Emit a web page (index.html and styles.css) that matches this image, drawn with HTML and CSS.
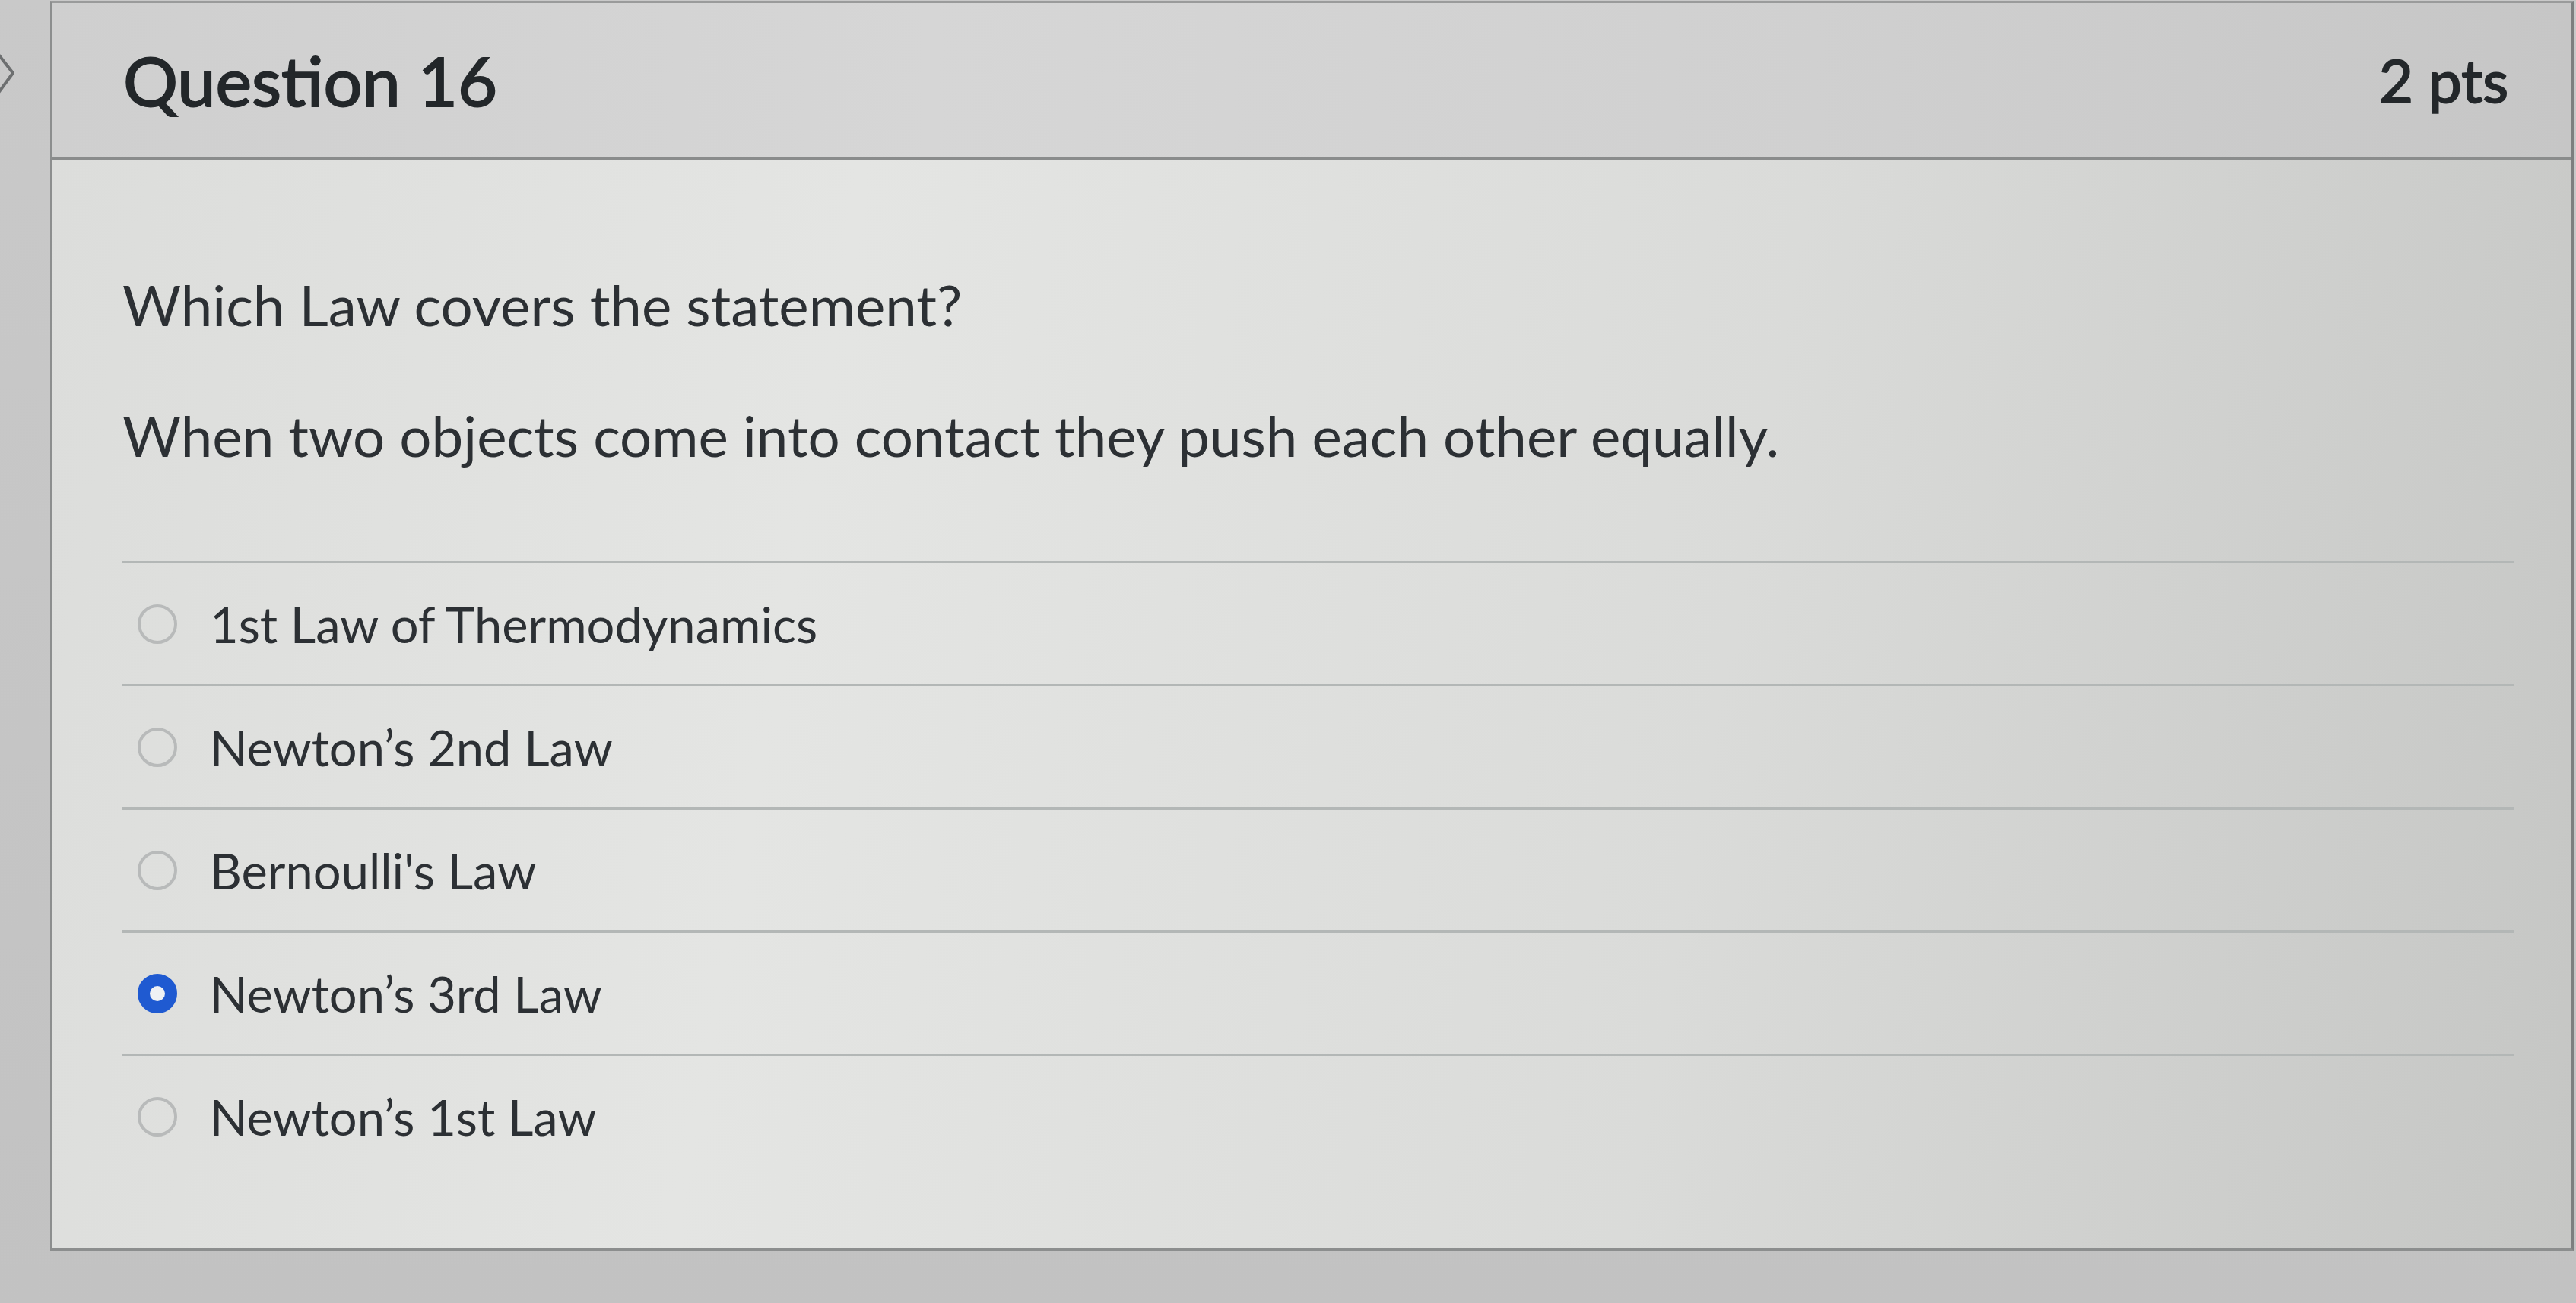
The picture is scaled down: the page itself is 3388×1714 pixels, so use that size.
FILE: index.html
```html
<!DOCTYPE html>
<html>
<head>
    <title>Question 16</title>
    <link rel="stylesheet" href="styles.css">
</head>
<body>
    <div class="page">
        <div class="gutter">
            <svg class="flag" width="24" height="80" viewBox="0 0 24 80">
                <polyline points="-8,2 17,34 -8,68" fill="none" stroke="#6d6f70" stroke-width="4" stroke-linejoin="round"/>
            </svg>
        </div>

        <div class="question">
            <div class="header">
                <span class="name">Question 16</span>
                <span class="pts">2 pts</span>
            </div>

            <div class="content">
                <p class="text first">Which Law covers the statement?</p>
                <p class="text">When two objects come into contact they push each other equally.</p>

                <div class="answers">
                    <div class="answer">
                        <span class="radio"></span>
                        <span class="label">1st Law of Thermodynamics</span>
                    </div>
                    <div class="answer">
                        <span class="radio"></span>
                        <span class="label">Newton’s 2nd Law</span>
                    </div>
                    <div class="answer">
                        <span class="radio"></span>
                        <span class="label">Bernoulli's Law</span>
                    </div>
                    <div class="answer">
                        <span class="radio checked"></span>
                        <span class="label">Newton’s 3rd Law</span>
                    </div>
                    <div class="answer">
                        <span class="radio"></span>
                        <span class="label">Newton’s 1st Law</span>
                    </div>
                </div>
            </div>
        </div>
    </div>
</body>
</html>
```

FILE: styles.css
```css
html, body {
    margin: 0;
    height: 100%;
}
body {
    font-family: Lato, "Open Sans", sans-serif;
    color: #2c3034;
    background: linear-gradient(180deg, #c9c9c9 0%, #c2c2c2 100%);
    overflow: hidden;
}
.page {
    display: flex;
    align-items: flex-start;
}
.gutter {
    width: 66px;
    flex: none;
    padding-top: 62px;
}
.flag {
    display: block;
}
.question {
    width: 3319px;
    flex: none;
    border: 3px solid #8c8e8e;
    border-top-color: #9a9b9b;
    border-right-color: #7d7f7f;
    margin-top: 1px;
    box-sizing: border-box;
}
.header {
    height: 206px;
    box-sizing: border-box;
    display: flex;
    justify-content: space-between;
    align-items: center;
    padding: 0 83px 0 93px;
    border-bottom: 4px solid #8a8c8c;
    background: linear-gradient(90deg, #cfcfcf 0%, #d6d6d6 35%, #d0d0d0 70%, #c6c6c6 100%);
    font-size: 90px;
    color: #23272a;
}
.name {
    -webkit-text-stroke: 2px #23272a;
}
.pts {
    font-size: 78px;
    -webkit-text-stroke: 2px #23272a;
}
.content {
    padding: 149px 76px 94px 92px;
    background: linear-gradient(100deg, #dcdddb 0%, #e4e5e3 30%, #dadbd9 65%, #c5c6c4 100%);
}
.text {
    margin: 90px 0 0;
    font-size: 74.5px;
    line-height: 82px;
}
.text.first {
    margin-top: 0;
}
.answers {
    margin-top: 125px;
}
.answer {
    height: 162px;
    box-sizing: border-box;
    border-top: 3px solid #b3b7b6;
    display: flex;
    align-items: center;
    padding-left: 20px;
    font-size: 65px;
}
.radio {
    width: 52px;
    height: 52px;
    box-sizing: border-box;
    border-radius: 50%;
    border: 4px solid #b8baba;
    margin-right: 43px;
    flex: none;
}
.radio.checked {
    border: 16px solid #1f5ad1;
    background-color: #eef1f4;
}
.label {
    line-height: 82px;
}
```
